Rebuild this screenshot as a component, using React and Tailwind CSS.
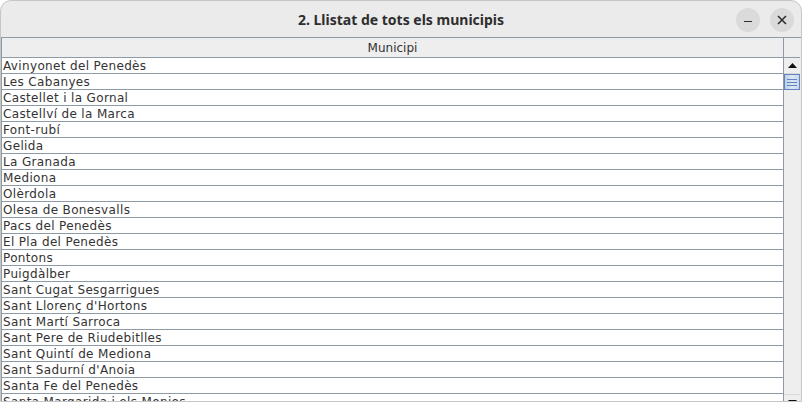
import React from "react";

const rows = [
  "Avinyonet del Penedès",
  "Les Cabanyes",
  "Castellet i la Gornal",
  "Castellví de la Marca",
  "Font-rubí",
  "Gelida",
  "La Granada",
  "Mediona",
  "Olèrdola",
  "Olesa de Bonesvalls",
  "Pacs del Penedès",
  "El Pla del Penedès",
  "Pontons",
  "Puigdàlber",
  "Sant Cugat Sesgarrigues",
  "Sant Llorenç d'Hortons",
  "Sant Martí Sarroca",
  "Sant Pere de Riudebitlles",
  "Sant Quintí de Mediona",
  "Sant Sadurní d'Anoia",
  "Santa Fe del Penedès",
  "Santa Margarida i els Monjos",
];

export default function App() {
  return (
    <div className="w-[802px] h-[402px] bg-white overflow-hidden">
      <div className="w-[802px] h-[402px] flex flex-col bg-[#ebebeb] border border-[#c6c6c6] rounded-t-[11px] overflow-hidden">
        {/* title bar */}
        <div className="h-[36px] shrink-0 relative flex items-center justify-center">
          <span className="text-[14px] font-bold text-[#2e2e2e] [font-family:'Noto_Sans',sans-serif]">
            2. Llistat de tots els municipis
          </span>
          <div className="absolute right-[7px] top-[7px] flex gap-[10px]">
            <div className="w-[24px] h-[24px] rounded-full bg-[#dadada] flex items-center justify-center">
              <div className="w-[8px] h-[1.5px] bg-[#2e2e2e] mt-[3px]" />
            </div>
            <div className="w-[24px] h-[24px] rounded-full bg-[#dadada] flex items-center justify-center">
              <svg width="10" height="10" viewBox="0 0 10 10">
                <path d="M1 1 L9 9 M9 1 L1 9" stroke="#2e2e2e" strokeWidth="1.6" />
              </svg>
            </div>
          </div>
        </div>
        {/* content */}
        <div className="flex-1 flex flex-col border-t border-[#8e9aa6] bg-[#eeeeee] pr-[1px] pb-[3px]">
          <div className="flex-1 flex border-l border-[#8e9aa6] overflow-hidden [font-family:'DejaVu_Sans',sans-serif] text-[12px]">
            {/* table */}
            <div className="flex-1 flex flex-col overflow-hidden border-r border-[#8e9aa6]">
              <div className="h-[20px] shrink-0 border-b border-[#8e9aa6] bg-[#eeeeee] flex items-center justify-center text-[#333333] text-[12px]">
                Municipi
              </div>
              <div className="flex-1 overflow-hidden bg-white">
                {rows.map((r) => (
                  <div
                    key={r}
                    className="h-[16px] border-b border-[#8e9aa6] flex items-center pl-[1px] text-[#333333] leading-none whitespace-nowrap tracking-[0.35px]"
                  >
                    {r}
                  </div>
                ))}
              </div>
            </div>
            {/* scrollbar */}
            <div className="w-[16px] shrink-0 flex flex-col bg-[#eeeeee]">
              <div className="h-[20px] shrink-0 border-b border-[#8e9aa6] bg-[#eeeeee]" />
              <div className="h-[16px] shrink-0 flex items-center justify-center bg-[#eeeeee] border-b border-[#d8d8d8]">
                <svg width="9" height="5" viewBox="0 0 9 5">
                  <path d="M0 5 L4.5 0 L9 5 Z" fill="#111" />
                </svg>
              </div>
              <div className="h-[16px] shrink-0 bg-gradient-to-r from-[#b8cfe5] via-[#dde9f5] to-[#c6d9ec] border border-[#6382bf] flex flex-col items-center justify-center gap-[2px]">
                <div className="w-[10px] h-[1px] bg-[#6382bf]" />
                <div className="w-[10px] h-[1px] bg-[#6382bf]" />
                <div className="w-[10px] h-[1px] bg-[#6382bf]" />
              </div>
              <div className="flex-1" />
              <div className="h-[16px] shrink-0 flex items-center justify-center bg-[#eeeeee] border-t border-[#d8d8d8]">
                <svg width="9" height="5" viewBox="0 0 9 5">
                  <path d="M0 0 L9 0 L4.5 5 Z" fill="#111" />
                </svg>
              </div>
            </div>
          </div>
          <div className="h-0 border-t border-[#8e9aa6]" />
        </div>
      </div>
    </div>
  );
}
